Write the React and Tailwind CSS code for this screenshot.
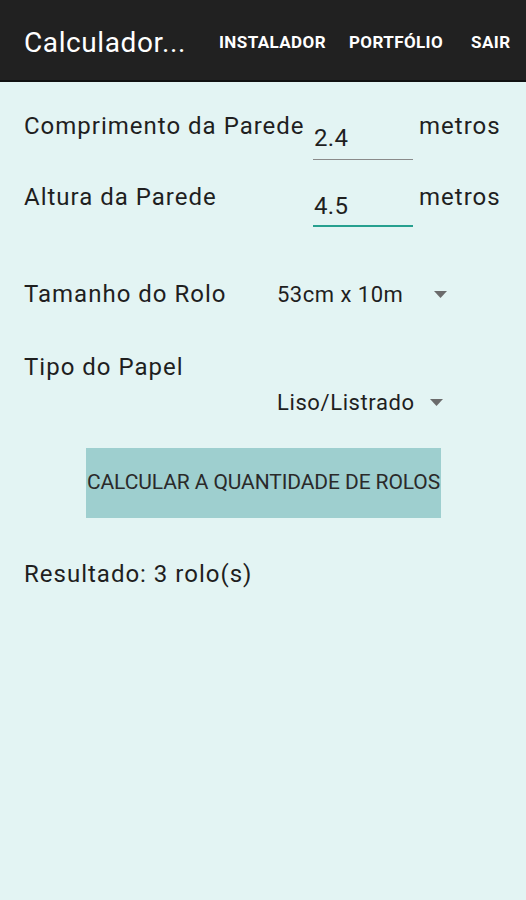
import React from 'react';

function Arrow() {
  return (
    <svg width="13" height="7" viewBox="0 0 13 7" className="shrink-0">
      <path d="M0 0 L13 0 L6.5 7 Z" fill="#6b6b6b" />
    </svg>
  );
}

export default function App() {
  return (
    <div className="min-h-[900px] bg-[#e3f4f3] font-['Roboto',sans-serif] text-[#1f1f1f]">
      <div className="h-[82px] bg-[#212121] flex items-center pl-[24px] pr-[15px] pt-[5px] border-b-2 border-[#111]">
        <div className="text-white text-[28px] tracking-[0.6px] w-[195px]">Calculador...</div>
        <div className="flex items-center text-white font-bold text-[17px] tracking-[0.4px]">
          <span>INSTALADOR</span>
          <span className="ml-[23px]">PORTFÓLIO</span>
          <span className="ml-[28px]">SAIR</span>
        </div>
      </div>

      <div className="px-[24px] text-[24px] tracking-[1px]">
        {/* comprimento */}
        <div className="flex items-start h-[72px] pt-[29px]">
          <div className="w-[289px] leading-[30px] whitespace-nowrap">Comprimento da Parede</div>
          <div className="w-[100px] mt-[4px]">
            <div className="leading-[30px] pl-[1px] pt-[8px] pb-[6px] border-b border-[#8a8a8a] tracking-[0.3px]">2.4</div>
          </div>
          <div className="ml-[6px] leading-[30px]">metros</div>
        </div>

        {/* altura */}
        <div className="flex items-start h-[80px] pt-[28px]">
          <div className="w-[289px] leading-[30px]">Altura da Parede</div>
          <div className="w-[100px]">
            <div className="leading-[30px] pl-[1px] pt-[9px] pb-[4px] border-b-2 border-[#27a08f] tracking-[0.3px]">4.5</div>
          </div>
          <div className="ml-[6px] leading-[30px]">metros</div>
        </div>

        {/* tamanho */}
        <div className="flex items-center mt-[45px] h-[30px]">
          <div className="w-[253px]">Tamanho do Rolo</div>
          <div className="w-[157px] text-[22px] tracking-[0.5px]">53cm x 10m</div>
          <Arrow />
        </div>

        {/* tipo */}
        <div className="mt-[43px] leading-[30px]">Tipo do Papel</div>
        <div className="flex items-center h-[30px] mt-[5px] pl-[253px]">
          <div className="w-[153px] text-[22px] tracking-[0.6px]">Liso/Listrado</div>
          <Arrow />
        </div>

        {/* button */}
        <div className="mt-[31px] ml-[62px] w-[355px] h-[70px] bg-[#9ecfcf] flex items-center justify-center text-[21px] text-[#2a2a2a] whitespace-nowrap tracking-[-0.1px]">
          CALCULAR A QUANTIDADE DE ROLOS
        </div>

        <div className="mt-[41px] leading-[30px]">Resultado: 3 rolo(s)</div>
      </div>
    </div>
  );
}
